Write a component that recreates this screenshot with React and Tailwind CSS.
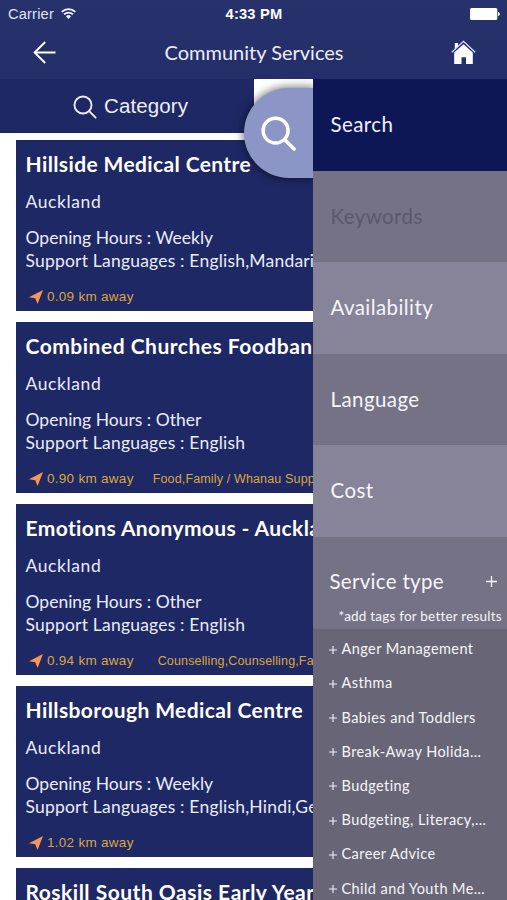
import { useState } from 'react';

const services = [
  { name: 'Hillside Medical Centre', nameClass: 'tracking-[0.38px]', city: 'Auckland', hours: 'Weekly', languages: 'English,Mandarin', distance: '0.09', tags: '' },
  { name: 'Combined Churches Foodbank', nameClass: 'tracking-[0.5px]', city: 'Auckland', hours: 'Other', languages: 'English', distance: '0.90', tags: 'Food,Family / Whanau Support', tagsClass: 'ml-[19px]' },
  { name: 'Emotions Anonymous - Auckland', nameClass: 'tracking-[0.38px]', city: 'Auckland', hours: 'Other', languages: 'English', distance: '0.94', tags: 'Counselling,Counselling,Family', tagsClass: 'ml-[24px]' },
  { name: 'Hillsborough Medical Centre', nameClass: 'tracking-[0.4px]', city: 'Auckland', hours: 'Weekly', languages: 'English,Hindi,German', distance: '1.02', tags: '' },
  { name: 'Roskill South Oasis Early Years', nameClass: 'tracking-[0.5px]', city: 'Auckland', hours: 'Weekly', languages: 'English', distance: '1.10', tags: '' },
];

const filters = [
  { label: 'Search', className: 'bg-[#0e1755] text-[#eef0fb]' },
  { label: 'Keywords', className: 'bg-[#757286] text-[#5b5869]' },
  { label: 'Availability', className: 'bg-[#878499] text-[#f5f5fb]' },
  { label: 'Language', className: 'bg-[#757286] text-[#f5f5fb]' },
  { label: 'Cost', className: 'bg-[#878499] text-[#f5f5fb]' },
];

const serviceTypes = [
  'Anger Management',
  'Asthma',
  'Babies and Toddlers',
  'Break-Away Holida…',
  'Budgeting',
  'Budgeting, Literacy,…',
  'Career Advice',
  'Child and Youth Me…',
];

function StatusBar() {
  return (
    <div className="grid grid-cols-3 items-center h-7 pl-2 pr-[7px] text-[14.7px] font-['Liberation_Sans',sans-serif]">
      <div className="flex items-center gap-[7px] text-[#dfe3f6]">
        <span className="tracking-[0.15px]">Carrier</span>
        <svg className="w-[15px] h-[11px]" viewBox="0 0 15 11" fill="none" stroke="#f2f4ff" strokeWidth="1.7">
          <path d="M0.7 3.9a9.6 9.6 0 0 1 13.6 0" />
          <path d="M3 6.4a6.4 6.4 0 0 1 9 0" />
          <path d="M7.5 10.9L5 8.3a3.6 3.6 0 0 1 5 0z" fill="#f2f4ff" stroke="none" />
        </svg>
      </div>
      <span className="text-center font-bold tracking-[0.2px] text-white whitespace-nowrap">4:33 PM</span>
      <svg className="w-[30px] h-3 justify-self-end" viewBox="0 0 30 12" fill="#fff">
        <rect x="0" y="0" width="27.3" height="12" rx="1.5" />
        <path d="M28 4c2.4.4 2.4 3.6 0 4z" />
      </svg>
    </div>
  );
}

function NavBar() {
  return (
    <div className="flex items-center justify-between h-[51px] pl-[33px] pr-[31px]">
      <svg className="w-[23px] h-[23px] -mt-[3px]" viewBox="0 0 23 23" fill="none" stroke="#fff" strokeWidth="1.9">
        <path d="M12.2 1L1.6 11.5L12.2 22M1.6 11.5H22.5" />
      </svg>
      <h1 className="text-[20px] text-[#eceefa] -mr-[1px] -mt-[3px]">Community Services</h1>
      <svg className="w-[25px] h-[25px] -mt-[2px]" viewBox="0 0 25 25">
        <path d="M3.2 12.5L12.5 4.2L21.8 12.5V24H15V17.3H10.5V24H3.2z" fill="#fff" />
        <path d="M3.8 3H7V6L3.8 9z" fill="#fff" />
        <path d="M0.8 12.2L12.5 1.4L24.2 12.2" fill="none" stroke="#dfe4ff" strokeWidth="1.2" />
      </svg>
    </div>
  );
}

function SearchIcon({ className, strokeWidth }) {
  return (
    <svg className={className} viewBox="0 0 36 36" fill="none" stroke="currentColor" strokeWidth={strokeWidth} strokeLinecap="round">
      <circle cx="15" cy="15" r="12.8" />
      <path d="M24.5 24.5L34 34" />
    </svg>
  );
}

function ServiceCard({ service }) {
  return (
    <article className="h-[171px] shrink-0 bg-[#1e2864] pl-[10px] pt-[10px] text-[#e9ecfa] whitespace-nowrap overflow-hidden">
      <h2 className={`text-[21px] leading-7 font-bold text-white ${service.nameClass}`}>{service.name}</h2>
      <p className="mt-[12px] text-[17.5px] leading-[23px] tracking-[0.6px]">{service.city}</p>
      <p className="mt-[13px] text-[17.5px] leading-[23px]">Opening Hours : {service.hours}</p>
      <p className="text-[17.5px] leading-[23px] tracking-[0.2px]">Support Languages : {service.languages}</p>
      <div className="flex items-center mt-[16px] pl-[3.5px] h-[18px] text-[#dba63f] font-['Liberation_Sans',sans-serif]">
        <svg className="w-[14px] h-[14px] mr-[4px] -mt-px shrink-0" viewBox="0 0 14 14" fill="#f79552">
          <path d="M14 0L0 7.2L6.2 8.2L8.6 14z" />
        </svg>
        <span className="text-[13.5px] tracking-[0.28px]">{service.distance} km away</span>
        <span className={`text-[12.5px] tracking-[0.15px] ${service.tagsClass || ''}`}>{service.tags}</span>
      </div>
    </article>
  );
}

function FilterPanel() {
  return (
    <aside className="flex flex-col w-[194.5px] shrink-0 overflow-hidden text-[#f5f5fb]">
      {filters.map((filter) => (
        <button
          key={filter.label}
          className={`flex items-center h-[91.6px] shrink-0 pl-[18px] pb-px text-left text-[20.5px] tracking-[0.42px] ${filter.className}`}
        >
          {filter.label}
        </button>
      ))}
      <div className="h-[92px] shrink-0 bg-[#757286] pl-[17px] pt-[30px]">
        <div className="flex items-center justify-between pr-[10px]">
          <span className="text-[20.5px] leading-7 tracking-[0.3px]">Service type</span>
          <svg className="w-[11px] h-[11px] mt-px" viewBox="0 0 11 11" stroke="#f5f5fb" strokeWidth="1.3">
            <path d="M5.5 0V11M0 5.5H11" />
          </svg>
        </div>
        <p className="mt-[12px] pl-[9px] text-[13.5px] leading-[18px] tracking-[0.21px] whitespace-nowrap">*add tags for better results</p>
      </div>
      <ul className="grow bg-[#686676] pl-[16px] pt-[3px]">
        {serviceTypes.map((type) => (
          <li key={type} className="flex items-center gap-[5px] h-[34.2px] text-[14.5px] tracking-[0.42px] whitespace-nowrap">
            <svg className="w-[8px] h-[8px] mt-px shrink-0" viewBox="0 0 8 8" stroke="#f0f0f7" strokeWidth="1.1">
              <path d="M4 0V8M0 4H8" />
            </svg>
            {type}
          </li>
        ))}
      </ul>
    </aside>
  );
}

function App() {
  const [open, setOpen] = useState(true);

  return (
    <div className="flex flex-col w-[507px] h-[900px] overflow-hidden bg-white font-[Lato,sans-serif]">
      <header className="h-[79px] shrink-0 bg-linear-to-b from-[#27316c] to-[#242e68]">
        <StatusBar />
        <NavBar />
      </header>

      <div className="relative flex grow min-h-0">
        <main className="flex flex-col grow min-w-0 overflow-hidden">
          <button className="flex items-center gap-[7px] w-[254px] h-[54px] shrink-0 pl-[73px] pt-px bg-[#1e2864] text-[#eceefa] text-[20.5px] tracking-[0.1px] font-['Liberation_Sans',sans-serif]">
            <SearchIcon className="w-6 h-6" strokeWidth={2.8} />
            Category
          </button>
          <div className="flex flex-col gap-[11px] pt-[7px] pl-[15.5px] min-h-0 overflow-hidden">
            {services.map((service) => (
              <ServiceCard key={service.name} service={service} />
            ))}
          </div>
        </main>

        {/* pull tab on the edge of the drawer */}
        <div className="absolute left-[234px] top-0 w-[78.5px] h-[115px] overflow-hidden">
          <button
            onClick={() => setOpen(!open)}
            className="absolute left-[10px] top-[9px] w-[69px] h-[90px] rounded-l-[45px] bg-[#8b96c6] text-white shadow-[0_0_8px_1px_rgba(0,0,0,0.55)]"
          >
            <SearchIcon className="w-[35px] h-[35px] ml-[17px]" strokeWidth={3.6} />
          </button>
        </div>

        {open && <FilterPanel />}
      </div>
    </div>
  );
}

export default App;
